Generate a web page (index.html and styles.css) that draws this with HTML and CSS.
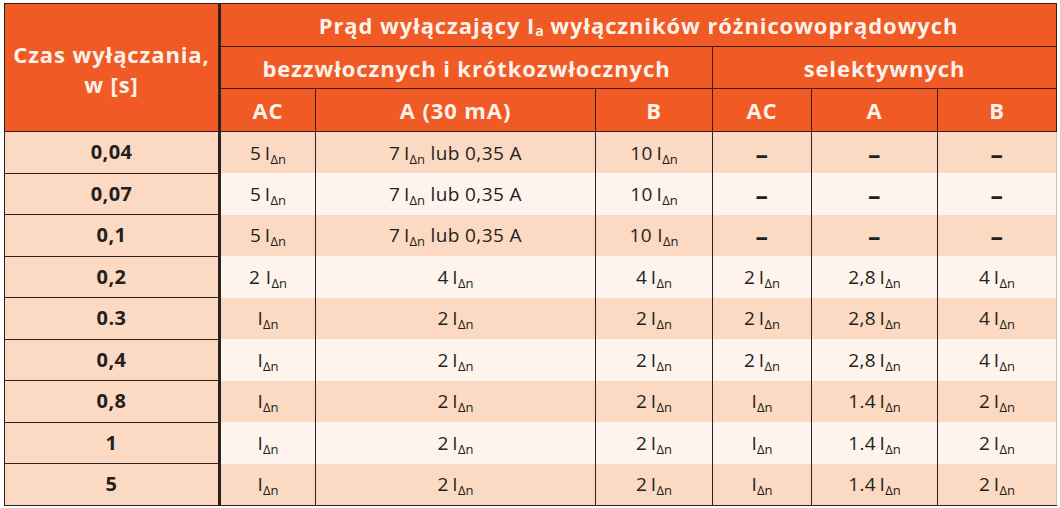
FILE: index.html
```html
<!DOCTYPE html>
<html lang="pl">
<head>
<meta charset="utf-8">
<title>Prąd wyłączający</title>
<link rel="stylesheet" href="styles.css">
</head>
<body>
<table class="tbl">
  <colgroup>
    <col class="c1"><col class="c2"><col class="c3"><col class="c4"><col class="c5"><col class="c6"><col class="c7">
  </colgroup>
  <thead>
    <tr class="h1">
      <th rowspan="3" class="first">Czas wyłączania,<br>w [s]</th>
      <th colspan="6">Prąd wyłączający I<sub class="sa">a</sub> wyłączników różnicowoprądowych</th>
    </tr>
    <tr class="h2">
      <th colspan="3">bezzwłocznych i krótkozwłocznych</th>
      <th colspan="3">selektywnych</th>
    </tr>
    <tr class="h3">
      <th>AC</th><th>A (30 mA)</th><th>B</th><th>AC</th><th>A</th><th>B</th>
    </tr>
  </thead>
  <tbody>
    <tr class="dk"><td class="first">0,04</td><td>5&#8201;I<sub>Δn</sub></td><td>7&#8201;I<sub>Δn</sub> lub 0,35 A</td><td>10&#8201;I<sub>Δn</sub></td><td class="dash">–</td><td class="dash">–</td><td class="dash">–</td></tr>
    <tr class="lt"><td class="first">0,07</td><td>5&#8201;I<sub>Δn</sub></td><td>7&#8201;I<sub>Δn</sub> lub 0,35 A</td><td>10&#8201;I<sub>Δn</sub></td><td class="dash">–</td><td class="dash">–</td><td class="dash">–</td></tr>
    <tr class="dk"><td class="first">0,1</td><td>5&#8201;I<sub>Δn</sub></td><td>7&#8201;I<sub>Δn</sub> lub 0,35 A</td><td>10 I<sub>Δn</sub></td><td class="dash">–</td><td class="dash">–</td><td class="dash">–</td></tr>
    <tr class="lt"><td class="first">0,2</td><td>2 I<sub>Δn</sub></td><td>4&#8201;I<sub>Δn</sub></td><td>4&#8201;I<sub>Δn</sub></td><td>2&#8201;I<sub>Δn</sub></td><td>2,8&#8201;I<sub>Δn</sub></td><td>4&#8201;I<sub>Δn</sub></td></tr>
    <tr class="dk"><td class="first">0.3</td><td>I<sub>Δn</sub></td><td>2&#8201;I<sub>Δn</sub></td><td>2&#8201;I<sub>Δn</sub></td><td>2&#8201;I<sub>Δn</sub></td><td>2,8&#8201;I<sub>Δn</sub></td><td>4&#8201;I<sub>Δn</sub></td></tr>
    <tr class="lt"><td class="first">0,4</td><td>I<sub>Δn</sub></td><td>2&#8201;I<sub>Δn</sub></td><td>2&#8201;I<sub>Δn</sub></td><td>2&#8201;I<sub>Δn</sub></td><td>2,8&#8201;I<sub>Δn</sub></td><td>4&#8201;I<sub>Δn</sub></td></tr>
    <tr class="dk"><td class="first">0,8</td><td>I<sub>Δn</sub></td><td>2&#8201;I<sub>Δn</sub></td><td>2&#8201;I<sub>Δn</sub></td><td>I<sub>Δn</sub></td><td>1.4&#8201;I<sub>Δn</sub></td><td>2&#8201;I<sub>Δn</sub></td></tr>
    <tr class="lt"><td class="first">1</td><td>I<sub>Δn</sub></td><td>2&#8201;I<sub>Δn</sub></td><td>2&#8201;I<sub>Δn</sub></td><td>I<sub>Δn</sub></td><td>1.4&#8201;I<sub>Δn</sub></td><td>2&#8201;I<sub>Δn</sub></td></tr>
    <tr class="dk"><td class="first">5</td><td>I<sub>Δn</sub></td><td>2&#8201;I<sub>Δn</sub></td><td>2&#8201;I<sub>Δn</sub></td><td>I<sub>Δn</sub></td><td>1.4&#8201;I<sub>Δn</sub></td><td>2&#8201;I<sub>Δn</sub></td></tr>
  </tbody>
</table>
</body>
</html>
```
FILE: styles.css
```css
html, body {
  margin: 0;
  padding: 0;
  background: #ffffff;
}
body {
  padding: 3px 0 0 4px;
  font-family: "Open Sans", "Noto Sans", sans-serif;
  color: #231f20;
}
.tbl {
  border-collapse: collapse;
  table-layout: fixed;
  width: 1052px;
  border-top: 1px solid #2a2220;
  border-left: 1px solid #2a2220;
  border-right: 1px solid #c9c4c0;
  border-bottom: 1px solid #2a2220;
}
.c1 { width: 215px; }
.c2 { width: 96px; }
.c3 { width: 280px; }
.c4 { width: 117px; }
.c5 { width: 99px; }
.c6 { width: 126px; }
.c7 { width: 119px; }

th {
  background: #f05a24;
  color: #fdf1ea;
  font-weight: 700;
  font-size: 22px;
  letter-spacing: 0.9px;
  line-height: 26px;
  padding: 0;
  border: 1px solid #3a1e12;
  text-align: center;
  vertical-align: middle;
}
.h1 th { height: 42px; }
.h2 th { height: 41px; }
.h3 th { height: 42px; }
th.first {
  border-right: 3px solid #2a2220;
  line-height: 30px;
  padding-top: 2px;
}
.sa {
  font-size: 14px;
  vertical-align: -2px;
  line-height: 0;
  letter-spacing: 0;
}

td {
  height: 40.5px;
  padding: 0;
  font-size: 19px;
  letter-spacing: 0.4px;
  line-height: 24px;
  text-align: center;
  vertical-align: middle;
  border-left: 1px solid #2a2220;
  border-right: 1px solid #2a2220;
}
tr:last-child td { border-bottom: 1px solid #2a2220; }
td:last-child { border-right: 1px solid #c9c4c0; }
td.first {
  background: #fcd9c2;
  font-weight: 700;
  font-size: 20px;
  border-right: 3px solid #2a2220;
  border-bottom: 1px solid #2a2220;
}
td.dash {
  font-weight: 700;
  font-size: 25px;
}
tr.dk td { background: #fcd9c2; }
tr.lt td { background: #fef4ed; }
tr.lt td.first { background: #fcd9c2; }

sub {
  font-size: 13px;
  letter-spacing: 0;
  vertical-align: -4px;
  line-height: 0;
}
```
